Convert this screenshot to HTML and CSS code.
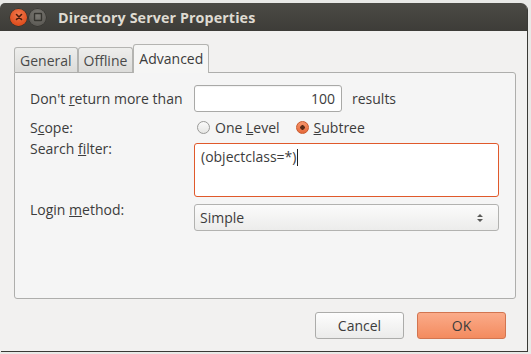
FILE: index.html
```html
<!DOCTYPE html>
<html>
<head>
<meta charset="utf-8">
<link rel="stylesheet" href="styles.css">
</head>
<body>
<div class="window">
  <div class="titlebar">
    <div class="wbtns">
      <span class="wbtn close"><svg width="16" height="16" viewBox="0 0 16 16"><path d="M5.5 5.5 L10.5 10.5 M10.5 5.5 L5.5 10.5" stroke="#4a1c0c" stroke-width="1.6" stroke-linecap="round"/></svg></span>
      <span class="wbtn max"><svg width="16" height="16" viewBox="0 0 16 16"><rect x="4.5" y="4.5" width="7" height="7" fill="none" stroke="#35342f" stroke-width="1.4" rx="0.5"/></svg></span>
    </div>
    <div class="title">Directory Server Properties</div>
  </div>
  <div class="content">
    <div class="tabs">
      <div class="tab">General</div>
      <div class="tab">Offline</div>
      <div class="tab active">Advanced</div>
    </div>
    <div class="panel">
      <div class="form">
        <div class="label mid">Don't <u>r</u>eturn more than</div>
        <div class="ctrl-row">
          <div class="spin">100</div>
          <span class="txt">results</span>
        </div>

        <div class="label mid">S<u>c</u>ope:</div>
        <div class="ctrl-row radios">
          <label class="radio"><span class="rb"></span><span>One <u>L</u>evel</span></label>
          <label class="radio"><span class="rb on"></span><span><u>S</u>ubtree</span></label>
        </div>

        <div class="label top">Search <u>f</u>ilter:</div>
        <div class="textarea">(objectclass=*)<span class="caret"></span></div>

        <div class="label top">Login <u>m</u>ethod:</div>
        <div class="combo"><span>Simple</span>
          <svg class="arrows" width="8" height="12" viewBox="0 0 8 12"><path d="M1 5 L4 2 L7 5 Z M1 7 L4 10 L7 7 Z" fill="#5a5a58"/></svg>
        </div>
      </div>
    </div>
    <div class="actions">
      <div class="btn">Cancel</div>
      <div class="btn ok">OK</div>
    </div>
  </div>
</div>
</body>
</html>
```
FILE: styles.css
```css
* { box-sizing: border-box; }
html, body { margin: 0; padding: 0; }
body {
  width: 531px;
  height: 354px;
  overflow: hidden;
  background: #e9e9e7;
  font-family: "Open Sans", "Noto Sans", sans-serif;
  color: #3c3c3c;
}
.window {
  margin-top: 3px;
  width: 527px;
  height: 348px;
  background: #f2f1f0;
  border-radius: 5px 6px 0 0;
  overflow: hidden;
  display: flex;
  flex-direction: column;
  box-shadow: 1px 1px 0 #3a3a36;
}
.titlebar {
  height: 28px;
  background: linear-gradient(#4b4a45, #3d3c38);
  display: flex;
  align-items: center;
  padding-left: 10px;
}
.wbtns { display: flex; gap: 2px; }
.wbtn {
  width: 17px; height: 17px;
  border-radius: 50%;
  display: flex; align-items: center; justify-content: center;
}
.wbtn.close {
  background: radial-gradient(circle at 50% 35%, #f27a4e, #de4f1f 70%);
  box-shadow: 0 0 0 0.5px #3a2418;
}
.wbtn.max {
  background: radial-gradient(circle at 50% 35%, #7d7b75, #5e5c57 70%);
  box-shadow: 0 0 0 0.5px #2e2d2a;
}
.title {
  margin-left: 12px;
  font-weight: bold;
  font-size: 14.3px;
  color: #dfdbd2;
  letter-spacing: 0.1px;
}
.content {
  flex: 1;
  padding: 13px 11px 0 14px;
  display: flex;
  flex-direction: column;
}
.tabs {
  display: flex;
  align-items: flex-end;
  height: 28px;
  position: relative;
  z-index: 1;
}
.tab {
  height: 25px;
  padding: 0 5px;
  font-size: 14px;
  line-height: 25px;
  color: #4a4a4a;
  background: linear-gradient(#eeeeec, #dcdcda);
  border: 1px solid #b4b4b1;
  border-bottom: none;
  border-radius: 3px 3px 0 0;
  margin-right: 0;
}
.tab.active {
  height: 29px;
  line-height: 27px;
  background: #f6f6f5;
  color: #3c3c3c;
  margin-bottom: -1px;
  padding: 0 5px;
}
.panel {
  height: 227px;
  background: #f5f5f5;
  border: 1px solid #aeaeac;
  border-radius: 0 3px 3px 3px;
  padding: 12px 15px 0 15px;
}
.form {
  display: grid;
  grid-template-columns: 164px 305px;
  grid-template-rows: 27px 17px 54px 27px;
  row-gap: 7px;
  font-size: 14px;
}
.label { white-space: nowrap; }
.label.mid { align-self: center; }
.label.top { align-self: start; margin-top: -4px; }
.ctrl-row { display: flex; align-items: center; }
.spin {
  width: 148px; height: 27px;
  background: #ffffff;
  border: 1px solid #a9a9a7;
  border-radius: 3px;
  text-align: right;
  padding-right: 6px;
  line-height: 25px;
  font-size: 14px;
  box-shadow: inset 0 1px 1px rgba(0,0,0,0.05);
}
.txt { margin-left: 10px; }
.radios { gap: 16px; padding-left: 3px; }
.radio { display: flex; align-items: center; gap: 5px; }
.rb {
  width: 13px; height: 13px;
  border-radius: 50%;
  border: 1px solid #9a9a98;
  background: linear-gradient(#fafafa, #e6e6e4);
}
.rb.on {
  border-color: #c8592c;
  background: radial-gradient(circle, #5a2a16 0 2px, transparent 2.5px), linear-gradient(#f7946b, #e5693a);
}
.textarea {
  border: 1px solid #e0592b;
  border-radius: 3px;
  background: #ffffff;
  padding: 3px 6px;
  line-height: 20px;
  font-size: 14px;
}
.caret {
  display: inline-block;
  width: 1px; height: 17px;
  background: #222;
  vertical-align: -4px;
  margin-left: 1px;
}
.combo {
  border: 1px solid #b2b2b0;
  border-radius: 3px;
  background: linear-gradient(#fbfbfb, #ececeb);
  display: flex;
  align-items: center;
  justify-content: space-between;
  padding: 0 14px 0 5px;
}
.actions {
  display: flex;
  justify-content: flex-end;
  gap: 13px;
  padding-top: 13px;
  padding-right: 10px;
}
.btn {
  width: 89px; height: 27px;
  border: 1px solid #acacaa;
  border-radius: 3px;
  background: linear-gradient(#fdfdfd, #ebebea);
  font-size: 14px;
  line-height: 25px;
  text-align: center;
  color: #3c3c3c;
}
.btn.ok {
  background: linear-gradient(#fbab89, #f38b5f);
  border-color: #d27550;
}
```
